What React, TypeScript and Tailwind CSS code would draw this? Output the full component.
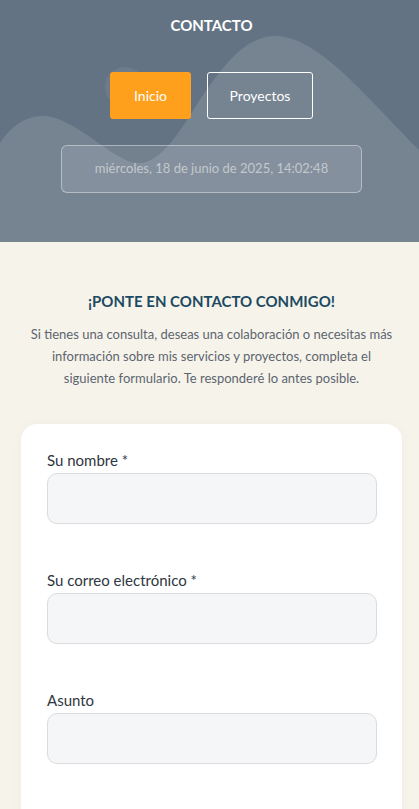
import React from "react";

const fields = [
  { label: "Su nombre *", type: "text" },
  { label: "Su correo electrónico *", type: "email" },
  { label: "Asunto", type: "text" },
];

const App: React.FC = () => {
  return (
    <div className="min-h-screen bg-[#f6f4ea] font-['Lato',sans-serif]">
      <header className="relative h-[242px] overflow-hidden bg-[#647383]">
        <svg
          className="absolute inset-0 h-full w-full"
          viewBox="0 0 419 242"
          preserveAspectRatio="none"
        >
          <path
            d="M0 143 C15 120 35 112 55 118 C85 128 115 160 135 163 C165 166 185 120 210 85 C235 50 255 35 278 36 C320 40 360 90 419 150 L419 242 L0 242 Z"
            fill="#ffffff"
            fillOpacity="0.12"
          />
          <circle cx="125" cy="87" r="20" fill="#ffffff" fillOpacity="0.06" />
        </svg>
        <div className="relative flex flex-col items-center pl-[4px] pt-[14px]">
          <h1 className="text-[15px] font-bold leading-[22px] text-white">CONTACTO</h1>
          <nav className="mt-[36px] flex gap-4">
            <a className="flex h-[47px] w-[81px] items-center justify-center rounded-[3px] bg-[#ffa01c] text-[14px] text-white">
              Inicio
            </a>
            <a className="flex h-[47px] w-[106px] items-center justify-center rounded-[3px] border border-white text-[14px] text-white">
              Proyectos
            </a>
          </nav>
          <div className="mt-[26px] flex h-[48px] w-[301px] items-center justify-center rounded-[6px] border border-white/40 bg-white/10 text-[13px] text-[#c3c8ce]">
            miércoles, 18 de junio de 2025, 14:02:48
          </div>
        </div>
      </header>

      <section className="flex flex-col items-center pl-[21px] pr-[17px] pt-[47px]">
        <h2 className="text-[15px] font-bold leading-[24px] text-[#1d4a63]">
          ¡PONTE EN CONTACTO CONMIGO!
        </h2>
        <p className="mt-[10px] max-w-[364px] text-center text-[13px] leading-[22px] text-[#5d6470]">
          Si tienes una consulta, deseas una colaboración o necesitas más información sobre mis
          servicios y proyectos, completa el siguiente formulario. Te responderé lo antes posible.
        </p>

        <form className="mt-[35px] flex w-full flex-col gap-[46px] rounded-[16px] bg-white pl-[26px] pr-[25px] pt-[26px] pb-[80px] shadow-[0_0_12px_rgba(0,0,0,0.03)]">
          {fields.map((f) => (
            <label key={f.label} className="flex flex-col">
              <span className="text-[15px] leading-[20px] text-[#2f3640]">{f.label}</span>
              <input
                type={f.type}
                className="mt-[3px] h-[51px] rounded-[10px] border border-[#dcdcdf] bg-[#f5f6f8] px-3 outline-none"
              />
            </label>
          ))}
        </form>
      </section>
    </div>
  );
};

export default App;
